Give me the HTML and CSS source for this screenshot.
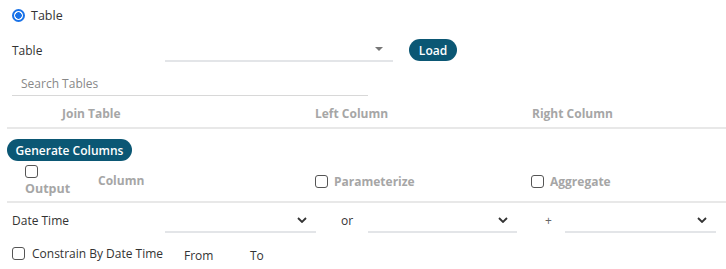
FILE: index.html
```html
<!DOCTYPE html>
<html lang="en">
<head>
  <meta charset="UTF-8" />
  <title>Table Source</title>
  <link rel="stylesheet" href="styles.css">
</head>
<body>
  <div class="panel">
    <label class="radio-row">
      <span class="radio"></span>
      Table
    </label>

    <div class="table-row">
      <span class="label">Table</span>
      <div class="select table-select">
        <span class="caret"></span>
      </div>
      <button class="pill load">Load</button>
    </div>

    <div class="search">Search Tables</div>

    <div class="join-head">
      <span class="col-join">Join Table</span>
      <span class="col-left">Left Column</span>
      <span class="col-right">Right Column</span>
    </div>

    <button class="pill generate">Generate Columns</button>

    <div class="cols-head">
      <div class="output">
        <span class="check"></span>
        <span>Output</span>
      </div>
      <span class="column">Column</span>
      <span class="param"><span class="check"></span>Parameterize</span>
      <span class="agg"><span class="check"></span>Aggregate</span>
    </div>

    <div class="date-row">
      <span class="label">Date Time</span>
      <div class="select dt1"><svg viewBox="0 0 10 6" width="10" height="6"><path d="M1 1l4 4 4-4" fill="none" stroke="#333" stroke-width="1.8"/></svg></div>
      <span class="or">or</span>
      <div class="select dt2"><svg viewBox="0 0 10 6" width="10" height="6"><path d="M1 1l4 4 4-4" fill="none" stroke="#333" stroke-width="1.8"/></svg></div>
      <span class="plus">+</span>
      <div class="select dt3"><svg viewBox="0 0 10 6" width="10" height="6"><path d="M1 1l4 4 4-4" fill="none" stroke="#333" stroke-width="1.8"/></svg></div>
    </div>

    <div class="constrain-row">
      <span class="check"></span>
      <span class="constrain">Constrain By Date Time</span>
      <span class="from">From</span>
      <span class="to">To</span>
    </div>
  </div>
</body>
</html>
```

FILE: styles.css
```css
* {
  box-sizing: border-box;
  margin: 0;
  padding: 0;
}
body {
  background: #fff;
  color: #333;
  font-family: "Open Sans", sans-serif;
  font-size: 12px;
}
.panel {
  padding: 6px 0 0 7px;
}
.radio-row {
  display: flex;
  align-items: center;
  gap: 6px;
  padding-left: 5px;
  height: 18px;
  font-size: 12.5px;
}
.radio {
  width: 13px;
  height: 13px;
  border-radius: 50%;
  border: 2px solid #1a73e8;
  background: radial-gradient(circle, #1a73e8 0 3px, #fff 3.5px);
}
.label {
  width: 158px;
  padding-left: 5px;
}
.table-row {
  display: flex;
  align-items: flex-end;
  margin-top: 14px;
  height: 24px;
}
.table-row .label {
  align-self: center;
}
.select {
  height: 24px;
  border-bottom: 2px solid #e3e5e8;
  display: flex;
  align-items: center;
  justify-content: flex-end;
  padding-right: 9px;
}
.table-select {
  width: 228px;
  padding-right: 10px;
}
.caret {
  border-left: 4px solid transparent;
  border-right: 4px solid transparent;
  border-top: 4px solid #777;
}
.pill {
  border: none;
  border-radius: 12px;
  background: #0b5774;
  color: #fff;
  font-family: "Open Sans", sans-serif;
  font-size: 12px;
  font-weight: 600;
  height: 22px;
}
.load {
  width: 48px;
  margin-left: 16px;
  align-self: center;
}
.search {
  margin: 9px 0 0 5px;
  width: 356px;
  height: 25px;
  padding: 4px 0 0 9px;
  color: #888;
  border-bottom: 1px solid #d8d8d8;
}
.join-head {
  display: flex;
  height: 33px;
  align-items: center;
  padding-top: 4px;
  border-bottom: 2px solid #e8e8e8;
  color: #a6a6a6;
  font-weight: 700;
}
.col-join {
  width: 308px;
  padding-left: 55px;
}
.col-left {
  width: 217px;
}
.generate {
  margin-top: 10px;
  width: 125px;
}
.cols-head {
  display: flex;
  align-items: flex-end;
  height: 42px;
  padding-bottom: 5px;
  border-bottom: 2px solid #e8e8e8;
  color: #a6a6a6;
  font-weight: 700;
}
.check {
  display: inline-block;
  width: 13px;
  height: 13px;
  border: 1.5px solid #555;
  border-radius: 3px;
  background: #fff;
}
.output {
  display: flex;
  flex-direction: column;
  align-items: flex-start;
  padding-left: 18px;
  width: 91px;
  line-height: 15px;
  font-size: 12.5px;
}
.output .check {
  margin-bottom: 3px;
}
.column {
  width: 217px;
  padding-bottom: 7px;
}
.param, .agg {
  display: flex;
  align-items: center;
  gap: 6px;
  padding-bottom: 6px;
}
.param {
  width: 216px;
}
.date-row {
  display: flex;
  align-items: center;
  height: 31px;
  padding-top: 4px;
}
.dt1 {
  width: 151px;
}
.or {
  width: 52px;
  padding-left: 25px;
}
.dt2 {
  width: 149px;
}
.plus {
  width: 48px;
  padding-left: 28px;
  color: #666;
}
.dt3 {
  width: 151px;
}
.constrain-row {
  display: flex;
  align-items: center;
  margin-top: 7px;
  padding-left: 5px;
  height: 24px;
}
.constrain {
  margin-left: 7px;
  width: 152px;
}
.from {
  width: 66px;
  padding-top: 4px;
}
.to {
  padding-top: 4px;
}
```
